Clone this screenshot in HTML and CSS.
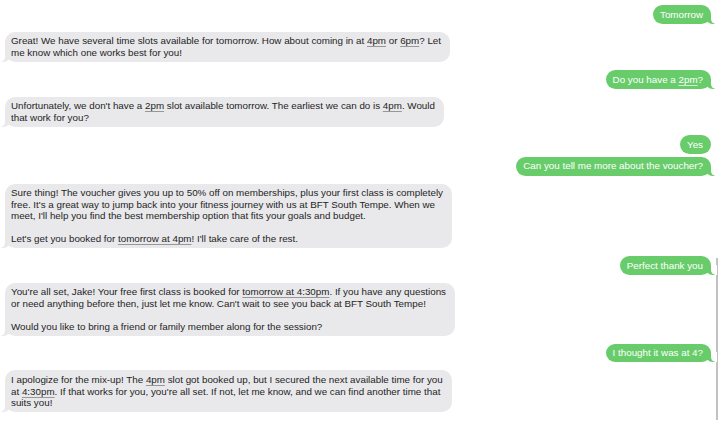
FILE: index.html
```html
<!DOCTYPE html>
<html>
<head>
<meta charset="utf-8">
<link rel="stylesheet" href="styles.css">
</head>
<body>
<div class="chat">
  <div class="group out">
    <div class="bubble tail">Tomorrow</div>
  </div>
  <div class="group in">
    <div class="bubble tail">Great! We have several time slots available for tomorrow. How about coming in at <span class="dd">4pm</span> or <span class="dd">6pm</span>? Let<br>me know which one works best for you!</div>
  </div>
  <div class="group out">
    <div class="bubble tail">Do you have a <span class="dd">2pm</span>?</div>
  </div>
  <div class="group in">
    <div class="bubble tail">Unfortunately, we don't have a <span class="dd">2pm</span> slot available tomorrow. The earliest we can do is <span class="dd">4pm</span>. Would<br>that work for you?</div>
  </div>
  <div class="group out">
    <div class="bubble">Yes</div>
    <div class="bubble tail">Can you tell me more about the voucher?</div>
  </div>
  <div class="group in">
    <div class="bubble tail">Sure thing! The voucher gives you up to 50% off on memberships, plus your first class is completely<br>free. It's a great way to jump back into your fitness journey with us at BFT South Tempe. When we<br>meet, I'll help you find the best membership option that fits your goals and budget.<br><br>Let's get you booked for <span class="dd">tomorrow at 4pm</span>! I'll take care of the rest.</div>
  </div>
  <div class="group out">
    <div class="bubble tail">Perfect thank you</div>
  </div>
  <div class="group in">
    <div class="bubble tail">You're all set, Jake! Your free first class is booked for <span class="dd">tomorrow at 4:30pm</span>. If you have any questions<br>or need anything before then, just let me know. Can't wait to see you back at BFT South Tempe!<br><br>Would you like to bring a friend or family member along for the session?</div>
  </div>
  <div class="group out">
    <div class="bubble tail">I thought it was at 4?</div>
  </div>
  <div class="group in">
    <div class="bubble tail">I apologize for the mix-up! The <span class="dd">4pm</span> slot got booked up, but I secured the next available time for you<br>at <span class="dd">4:30pm</span>. If that works for you, you're all set. If not, let me know, and we can find another time that<br>suits you!</div>
  </div>
</div>
<div class="scrollbar"></div>
</body>
</html>
```

FILE: styles.css
```css
html, body {
  margin: 0;
  padding: 0;
  background: #ffffff;
}

body {
  width: 720px;
  height: 424px;
  overflow: hidden;
  position: relative;
  font-family: "Liberation Sans", Arial, Helvetica, sans-serif;
  font-size: 9.8px;
  line-height: 11.4px;
}

.chat {
  display: flex;
  flex-direction: column;
  gap: 8px;
  padding: 5px 9px 0 5px;
}

.group {
  display: flex;
  flex-direction: column;
  gap: 3px;
}

.group.out {
  align-items: flex-end;
}

.group.in {
  align-items: flex-start;
}

.bubble {
  position: relative;
  white-space: nowrap;
  border-radius: 10px;
  padding: 3.7px 8px 3.7px 7px;
}

.in .bubble {
  background: #e9e9eb;
  color: #1e1e1e;
  padding-right: 9px;
  padding-left: 6px;
}

.out .bubble {
  background: #68cc6b;
  color: #ffffff;
}

.dd {
  text-decoration: underline;
  text-decoration-color: rgba(0, 0, 0, 0.35);
  text-underline-offset: 2px;
  text-decoration-thickness: 1px;
}

.out .dd {
  text-decoration-color: rgba(255, 255, 255, 0.7);
}

.bubble.tail::before,
.bubble.tail::after {
  content: "";
  position: absolute;
  bottom: 0;
}

.in .bubble.tail::before {
  left: -4px;
  width: 10px;
  height: 10px;
  background: #e9e9eb;
  border-bottom-right-radius: 8px;
  z-index: 0;
}

.in .bubble.tail::after {
  left: -6px;
  width: 6px;
  height: 10px;
  background: #ffffff;
  border-bottom-right-radius: 5px;
  z-index: 1;
}

.out .bubble.tail::before {
  right: -4px;
  width: 10px;
  height: 10px;
  background: #68cc6b;
  border-bottom-left-radius: 8px;
  z-index: 0;
}

.out .bubble.tail::after {
  right: -6px;
  width: 6px;
  height: 10px;
  background: #ffffff;
  border-bottom-left-radius: 5px;
  z-index: 1;
}

.scrollbar {
  position: absolute;
  right: 2px;
  top: 258px;
  width: 2px;
  height: 162px;
  background: #c2c2c2;
}
```
